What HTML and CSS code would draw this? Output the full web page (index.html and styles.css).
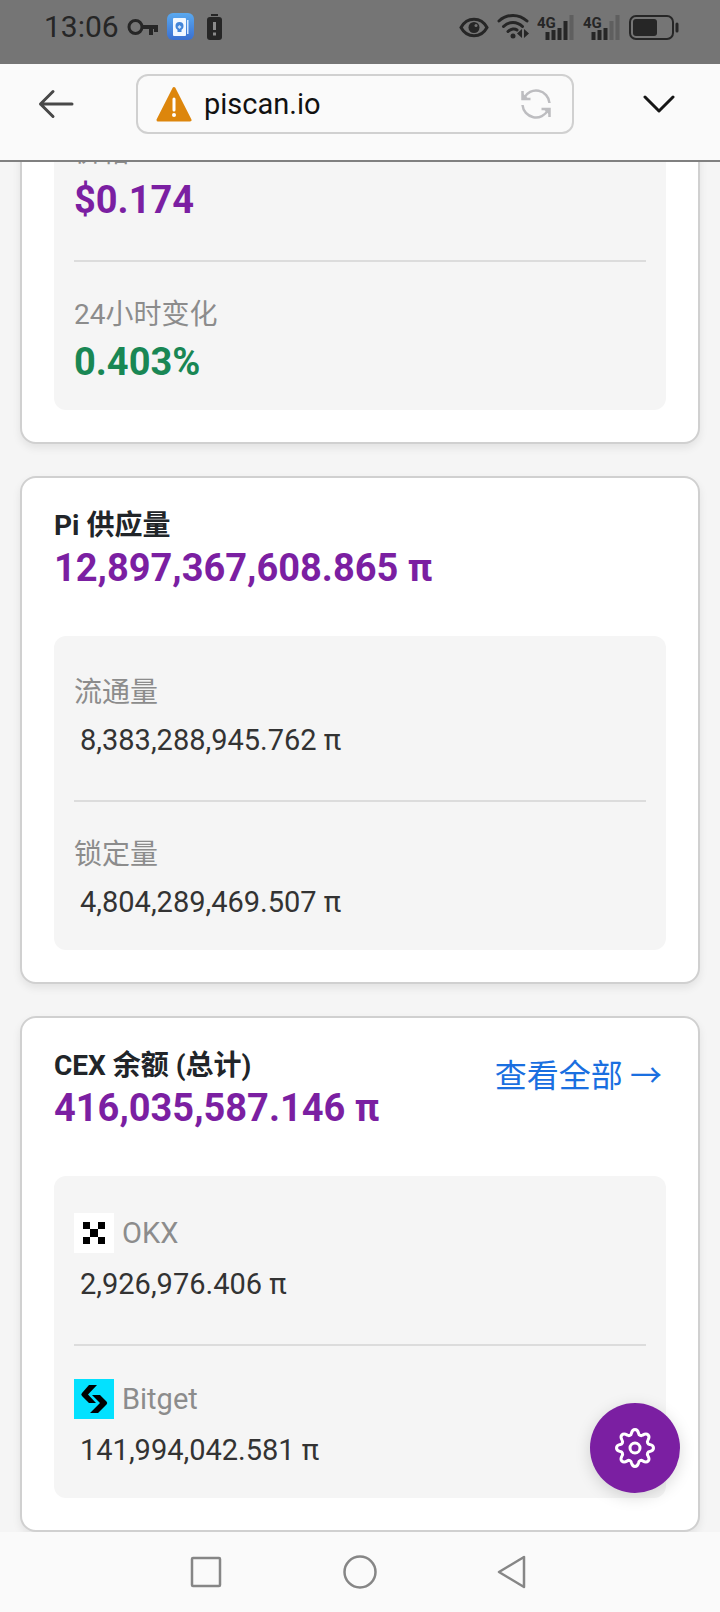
FILE: index.html
```html
<!DOCTYPE html>
<html lang="zh-CN">
  <head>
    <meta charset="UTF-8" />
    <meta name="viewport" content="width=device-width, initial-scale=1.0" />
    <title>piscan.io</title>
    <link rel="stylesheet" href="styles.css">
  </head>
  <body>
    <!-- Status bar -->
    <div class="status-bar">
      <div class="status-group">
        <span class="clock">13:06</span>
        <svg width="32" height="28" viewBox="0 0 32 28" fill="none" stroke="#262626" stroke-width="4">
          <circle cx="8.500" cy="14" r="6.500" stroke-width="3" />
          <path d="M15 14h16M24 14v8M29 14v5" />
        </svg>
        <svg width="27" height="28" viewBox="0 0 27 28">
          <defs>
            <linearGradient id="appBg" x1="0" y1="0" x2="0" y2="1">
              <stop offset="0" stop-color="#5aa9ef" />
              <stop offset="1" stop-color="#3a6fd0" />
            </linearGradient>
          </defs>
          <rect width="27" height="27" rx="6" fill="url(#appBg)" />
          <path d="M20 7h1.500v14H20z" fill="#d8e8fb" />
          <rect x="6" y="5" width="13" height="18" rx="1" fill="#f2f8ff" />
          <circle cx="12.500" cy="13" r="4" fill="#4385d8" />
          <path d="M10.500 15h4v4h-4z" fill="#4385d8" />
          <path d="M12.500 12l2 2-2 2-2-2z" fill="#cfe3fb" />
        </svg>
        <svg width="28" height="28" viewBox="0 0 28 28">
          <path d="M9 1h7v2H9z" fill="#262626" />
          <rect x="5" y="4" width="15" height="23" rx="3" fill="#262626" />
          <path d="M12.500 9v8M12.500 19.500v3" stroke="#8a8a8a" stroke-width="3" />
        </svg>
      </div>
      <div class="status-group">
        <svg width="30" height="28" viewBox="0 0 30 28">
          <path d="M2 14.500C8 3.500 22 3.500 28 14.500C22 25.500 8 25.500 2 14.500z" fill="none" stroke="#262626" stroke-width="3" />
          <circle cx="15" cy="14.500" r="5.500" fill="#262626" />
          <circle cx="17" cy="12.500" r="1.500" fill="#757575" />
        </svg>
        <svg width="32" height="28" viewBox="0 0 32 28">
          <g fill="none" stroke="#262626" stroke-width="3" stroke-linecap="round">
            <path d="M2 8C10 .5 22 .5 30 8" />
            <path d="M6.500 13.500C12 8 20 8 25.500 13.500" />
            <path d="M11 18.500C14 15.500 18 15.500 20 17" />
          </g>
          <circle cx="16" cy="23" r="2.500" fill="#262626" />
          <path d="M25 16v9l-5-4.500zM27 16v9l5-4.500z" fill="#262626" />
        </svg>
        <svg width="38" height="28" viewBox="0 0 38 28">
          <text class="network" x="0" y="15">4G</text>
          <path d="M10.500 19v8M16.500 17v10M22.500 15v12M28.500 8v19" stroke="#262626" stroke-width="4" />
          <path d="M34.500 2v25" stroke="#5f5f5f" stroke-width="4" />
        </svg>
        <svg width="38" height="28" viewBox="0 0 38 28">
          <text class="network" x="0" y="15">4G</text>
          <path d="M10.500 19v8M16.500 17v10M22.500 15v12" stroke="#262626" stroke-width="4" />
          <path d="M28.500 8v19M34.500 2v25" stroke="#5f5f5f" stroke-width="4" />
        </svg>
        <svg width="51" height="28" viewBox="0 0 51 28">
          <rect x="1" y="3" width="43" height="23" rx="6" fill="none" stroke="#262626" stroke-width="2" />
          <rect x="4" y="6" width="24" height="17" rx="3" fill="#262626" />
          <path d="M48 11v7" stroke="#262626" stroke-width="3" stroke-linecap="round" />
        </svg>
      </div>
    </div>

    <!-- Browser toolbar -->
    <header class="toolbar">
      <button class="icon-button" type="button" aria-label="返回">
        <svg width="36" height="32" viewBox="0 0 36 32" fill="none" stroke="#484848" stroke-width="3" stroke-linecap="round" stroke-linejoin="round">
          <path d="M34 16H2.500M15 3.500L2.500 16 15 28.500" />
        </svg>
      </button>
      <div class="address">
        <svg width="36" height="38" viewBox="0 0 36 38">
          <path d="M18 3.500L34 35H2z" fill="#dd860c" stroke="#dd860c" stroke-width="3" stroke-linejoin="round" />
          <path d="M18 14v11" stroke="#fff" stroke-width="3" stroke-linecap="round" />
          <circle cx="18" cy="30" r="2" fill="#fff" />
        </svg>
        <input class="address-input" type="text" value="piscan.io" aria-label="网址" />
        <button class="icon-button" type="button" aria-label="刷新">
          <svg width="32" height="32" viewBox="0 0 32 32" fill="none" stroke="#bdbdc0" stroke-width="2.500">
            <path d="M4 10A13.500 13.500 0 0 1 29.500 15M2.500 17A13.500 13.500 0 0 0 28 22" />
            <path d="M2.500 3v8h8M29.500 29v-8h-8" />
            <path d="M2.500 5v6h6zM29.500 27v-6h-6z" fill="#bdbdc0" stroke="none" />
          </svg>
        </button>
      </div>
      <button class="icon-button menu-button" type="button" aria-label="展开菜单">
        <svg width="32" height="18" viewBox="0 0 32 18" fill="none" stroke="#161616" stroke-width="3" stroke-linecap="round" stroke-linejoin="round">
          <path d="M2 2l14 14L30 2" />
        </svg>
      </button>
    </header>

    <main class="page">
      <section class="card">
        <dl class="panel">
          <div class="row">
            <dt>价格</dt>
            <dd class="amount">$0.174</dd>
          </div>
          <div class="row">
            <dt>24小时变化</dt>
            <dd class="amount up">0.403%</dd>
          </div>
        </dl>
      </section>

      <section class="card">
        <div class="card-header">
          <div>
            <h2>Pi 供应量</h2>
            <p class="amount">12,897,367,608.865 π</p>
          </div>
        </div>
        <dl class="panel">
          <div class="row">
            <dt>流通量</dt>
            <dd>8,383,288,945.762 π</dd>
          </div>
          <div class="row">
            <dt>锁定量</dt>
            <dd>4,804,289,469.507 π</dd>
          </div>
        </dl>
      </section>

      <section class="card">
        <div class="card-header">
          <div>
            <h2>CEX 余额 (总计)</h2>
            <p class="amount">416,035,587.146 π</p>
          </div>
          <a class="view-all" href="#">查看全部 →</a>
        </div>
        <dl class="panel">
          <div class="row">
            <dt class="exchange">
              <svg width="40" height="40" viewBox="0 0 40 40">
                <rect width="40" height="40" fill="#fff" />
                <path d="M9 9h7v7H9zM24 9h7v7h-7zM16 16h8v8h-8zM9 24h7v7H9zM24 24h7v7h-7z" />
              </svg>
              OKX
            </dt>
            <dd>2,926,976.406 π</dd>
          </div>
          <div class="row">
            <dt class="exchange">
              <svg width="40" height="40" viewBox="0 0 40 40">
                <rect width="40" height="40" fill="#03e1ff" />
                <path d="M15 6h8L14 15.500l8 8.500h-7l-7-7q-1.500-1.500 0-3zM18 16h8l6.500 6.500q1.500 1.500 0 3L24 34h-8l10-10z" />
              </svg>
              Bitget
            </dt>
            <dd>141,994,042.581 π</dd>
          </div>
        </dl>
      </section>

      <button class="settings" type="button" aria-label="设置">
        <svg width="40" height="40" viewBox="-20 -20 40 40" fill="none" stroke="#fff" stroke-width="3">
          <path d="M-3.600-14.600C-2.400-19.800 2.400-19.800 3.600-14.600A2.600 2.600 0 0 0 7.700-12.900C12.300-15.700 15.700-12.300 12.900-7.700A2.600 2.600 0 0 0 14.600-3.600C19.800-2.400 19.800 2.400 14.600 3.600A2.600 2.600 0 0 0 12.900 7.700C15.700 12.300 12.300 15.700 7.700 12.900A2.600 2.600 0 0 0 3.600 14.600C2.400 19.800-2.400 19.800-3.600 14.600A2.600 2.600 0 0 0-7.700 12.900C-12.300 15.700-15.700 12.300-12.900 7.700A2.600 2.600 0 0 0-14.600 3.600C-19.800 2.400-19.800-2.400-14.600-3.600A2.600 2.600 0 0 0-12.900-7.700C-15.700-12.300-12.300-15.700-7.700-12.900A2.600 2.600 0 0 0-3.600-14.600z" />
          <circle r="5" />
        </svg>
      </button>
    </main>

    <!-- System navigation -->
    <nav class="nav-bar">
      <button class="icon-button" type="button" aria-label="最近任务">
        <svg width="34" height="34" viewBox="0 0 34 34" fill="none" stroke="#868686" stroke-width="2.500">
          <rect x="3" y="3" width="28" height="28" rx="1" />
        </svg>
      </button>
      <button class="icon-button" type="button" aria-label="主屏幕">
        <svg width="34" height="34" viewBox="0 0 34 34" fill="none" stroke="#868686" stroke-width="2.500">
          <circle cx="17" cy="17" r="15.500" />
        </svg>
      </button>
      <button class="icon-button" type="button" aria-label="返回上一页">
        <svg width="34" height="34" viewBox="0 0 34 34" fill="none" stroke="#868686" stroke-width="2.500" stroke-linejoin="round">
          <path d="M27 2v30L2 17z" />
        </svg>
      </button>
    </nav>
  </body>
</html>
```
FILE: styles.css
```css
* {
  box-sizing: border-box;
  margin: 0;
  padding: 0;
}

body {
  display: flex;
  flex-direction: column;
  height: 100vh;
  overflow: hidden;
  background-color: #f5f5f5;
  color: #212529;
  font-family: Roboto, "Noto Sans CJK SC", sans-serif;
  font-size: 28px;
}

svg {
  display: block;
  flex-shrink: 0;
}

.icon-button {
  display: flex;
  align-items: center;
  justify-content: center;
  border: none;
  background: none;
  cursor: pointer;
}

/* Status bar */
.status-bar {
  display: flex;
  flex-shrink: 0;
  align-items: center;
  justify-content: space-between;
  height: 64px;
  padding: 0 40px 10px 44px;
  background-color: #757575;
  color: #262626;
}

.status-group {
  display: flex;
  align-items: center;
  gap: 8px;
}

.clock {
  font-size: 30px;
  line-height: 28px;
}

.network {
  font-size: 15px;
  font-weight: bold;
  fill: #262626;
}

/* Toolbar */
.toolbar {
  display: flex;
  flex-shrink: 0;
  align-items: center;
  gap: 62px;
  padding: 10px 38px 26px;
  border-bottom: 2px solid #808080;
  background-color: #fafafa;
}

.address {
  display: flex;
  flex: 1;
  align-items: center;
  gap: 12px;
  min-width: 0;
  height: 60px;
  padding: 0 20px 0 18px;
  border: 2px solid #d0d0d0;
  border-radius: 12px;
}

.address-input {
  flex: 1;
  min-width: 0;
  border: none;
  outline: none;
  background: none;
  color: #111;
  font-family: inherit;
  font-size: 29px;
}

.menu-button {
  width: 46px;
}

/* Page, scrolled to its lower part */
.page {
  position: relative;
  display: flex;
  flex: 1;
  flex-direction: column;
  justify-content: flex-end;
  gap: 32px;
  min-height: 0;
  padding: 0 20px;
  overflow: hidden;
}

.card {
  flex-shrink: 0;
  padding: 32px;
  border: 2px solid #d0d0d0;
  border-radius: 16px;
  background-color: #fff;
  box-shadow: 0 4px 8px rgba(0, 0, 0, 0.08);
}

.card-header {
  display: flex;
  justify-content: space-between;
  margin-bottom: 42px;
}

h2 {
  font-size: 28px;
  font-weight: bold;
  line-height: 32px;
}

.amount {
  color: #7b1fa2;
  font-size: 38px;
  font-weight: bold;
  line-height: 52px;
}

.view-all {
  padding-right: 4px;
  color: #1a6fe0;
  font-family: "Noto Sans CJK SC", sans-serif;
  font-size: 32px;
  line-height: 46px;
  text-decoration: none;
}

.panel {
  padding: 4px 20px 0;
  border-radius: 12px;
  background-color: #f5f5f5;
}

.row {
  padding: 32px 0 34px;
  border-bottom: 2px solid #dcdcdc;
}

.row:last-child {
  padding-bottom: 22px;
  border-bottom: none;
}

dt {
  color: #8c8c8c;
  line-height: 42px;
}

dd {
  padding-left: 6px;
  color: #333;
  font-size: 29px;
  line-height: 52px;
}

dd.amount {
  padding-left: 0;
  color: #7b1fa2;
  font-size: 38px;
}

dd.up {
  color: #198754;
}

.exchange {
  display: flex;
  align-items: center;
  gap: 8px;
  height: 46px;
  padding-bottom: 4px;
  font-size: 29px;
}

.settings {
  position: absolute;
  right: 40px;
  bottom: 39px;
  display: flex;
  align-items: center;
  justify-content: center;
  width: 90px;
  height: 90px;
  border: none;
  border-radius: 50%;
  background-color: #7b1fa2;
  box-shadow: 0 4px 16px rgba(0, 0, 0, 0.15);
  cursor: pointer;
}

/* System navigation */
.nav-bar {
  display: flex;
  flex-shrink: 0;
  align-items: center;
  justify-content: center;
  gap: 120px;
  height: 80px;
  background-color: #fafafa;
}
```
